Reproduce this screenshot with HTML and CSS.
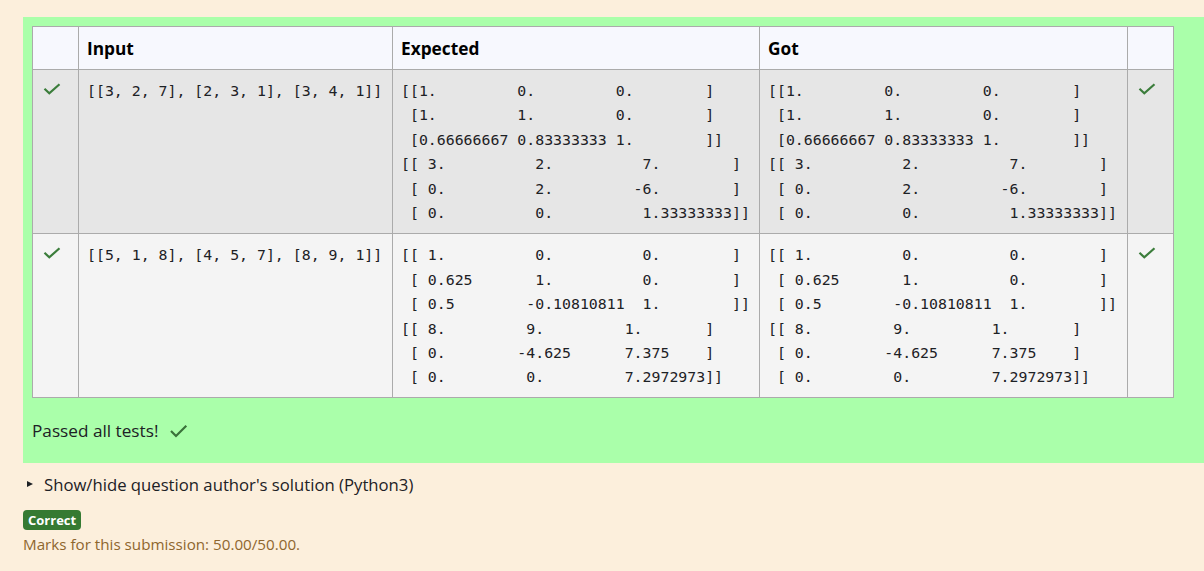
FILE: index.html
```html
<!DOCTYPE html>
<html lang="en">
<head>
<meta charset="utf-8">
<title>Test results</title>
<link rel="stylesheet" href="styles.css">
</head>
<body>
<div class="outcome">
  <div class="results">
    <table class="tests">
      <colgroup>
        <col class="c-icon">
        <col class="c-input">
        <col class="c-exp">
        <col class="c-got">
        <col class="c-icon">
      </colgroup>
      <thead>
        <tr>
          <th></th>
          <th>Input</th>
          <th>Expected</th>
          <th>Got</th>
          <th></th>
        </tr>
      </thead>
      <tbody>
        <tr class="r0">
          <td class="ic"><svg class="tick" viewBox="0 0 18 12" width="18" height="12"><path d="M1.5 5.8 L6.3 10.3 L16.5 1.2"/></svg></td>
          <td><pre>[[3, 2, 7], [2, 3, 1], [3, 4, 1]]</pre></td>
          <td><pre>[[1.         0.         0.        ]
 [1.         1.         0.        ]
 [0.66666667 0.83333333 1.        ]]
[[ 3.          2.          7.        ]
 [ 0.          2.         -6.        ]
 [ 0.          0.          1.33333333]]</pre></td>
          <td><pre>[[1.         0.         0.        ]
 [1.         1.         0.        ]
 [0.66666667 0.83333333 1.        ]]
[[ 3.          2.          7.        ]
 [ 0.          2.         -6.        ]
 [ 0.          0.          1.33333333]]</pre></td>
          <td class="ic"><svg class="tick" viewBox="0 0 18 12" width="18" height="12"><path d="M1.5 5.8 L6.3 10.3 L16.5 1.2"/></svg></td>
        </tr>
        <tr class="r1">
          <td class="ic"><svg class="tick" viewBox="0 0 18 12" width="18" height="12"><path d="M1.5 5.8 L6.3 10.3 L16.5 1.2"/></svg></td>
          <td><pre>[[5, 1, 8], [4, 5, 7], [8, 9, 1]]</pre></td>
          <td><pre>[[ 1.          0.          0.        ]
 [ 0.625       1.          0.        ]
 [ 0.5        -0.10810811  1.        ]]
[[ 8.         9.         1.       ]
 [ 0.        -4.625      7.375    ]
 [ 0.         0.         7.2972973]]</pre></td>
          <td><pre>[[ 1.          0.          0.        ]
 [ 0.625       1.          0.        ]
 [ 0.5        -0.10810811  1.        ]]
[[ 8.         9.         1.       ]
 [ 0.        -4.625      7.375    ]
 [ 0.         0.         7.2972973]]</pre></td>
          <td class="ic"><svg class="tick" viewBox="0 0 18 12" width="18" height="12"><path d="M1.5 5.8 L6.3 10.3 L16.5 1.2"/></svg></td>
        </tr>
      </tbody>
    </table>
    <p class="passed">Passed all tests! <svg class="tick big" viewBox="0 0 18 14" width="19" height="14"><path d="M1.5 7 L6.5 12 L16.8 1.8"/></svg></p>
  </div>
  <div class="toggle"><span class="tri"></span>Show/hide question author's solution (Python3)</div>
  <div class="badge-row"><span class="badge">Correct</span></div>
  <div class="marks">Marks for this submission: 50.00/50.00.</div>
</div>
</body>
</html>
```
FILE: styles.css
```css
html, body {
  margin: 0;
  padding: 0;
  background: #fcefdc;
  overflow: hidden;
}
body {
  font-family: "Open Sans", "Noto Sans", sans-serif;
  color: #1d2125;
}
.outcome {
  padding: 17px 0 0 23px;
}
.results {
  background: #aaffaa;
  padding: 9px 0 0 9px;
}
.tests {
  border-collapse: collapse;
  table-layout: fixed;
  width: 1141px;
}
.c-icon { width: 46px; }
.c-input { width: 314px; }
.c-exp { width: 367px; }
.c-got { width: 368px; }
.tests th, .tests td {
  border: 1px solid #ababab;
  text-align: left;
  vertical-align: top;
}
.tests th {
  background: #f7f8fe;
  color: #000;
  font-weight: 700;
  font-size: 17.3px;
  line-height: 25px;
  padding: 9px 8px 8px;
}
.tests td {
  padding: 9px 8px 8px;
}
.r1 td {
  padding-bottom: 7px;
}
.tests td.ic {
  padding: 13px 0 0 10px;
}
.r0 td { background: #e6e6e6; }
.r1 td { background: #f4f4f4; }
pre {
  margin: 0;
  font-family: "DejaVu Sans Mono", "Liberation Mono", monospace;
  font-size: 14.87px;
  line-height: 24.4px;
  color: #1d2125;
  white-space: pre;
}
.tick {
  display: block;
  fill: none;
  stroke: #3b7d3b;
  stroke-width: 2.2;
}
.tick.big {
  display: inline-block;
  vertical-align: -1px;
  margin-left: 6px;
  stroke: #3a723a;
}
.passed {
  margin: 0;
  padding: 20px 0 19px 0;
  font-size: 17.2px;
  line-height: 26px;
  color: #1d2125;
}
.toggle {
  margin-top: 9px;
  font-size: 16.7px;
  line-height: 25px;
  color: #1d2125;
  display: flex;
  align-items: center;
}
.tri {
  width: 0;
  height: 0;
  border-left: 6px solid #1d2125;
  border-top: 3.5px solid transparent;
  border-bottom: 3.5px solid transparent;
  margin: 0 11px 0 4px;
}
.badge-row {
  margin-top: 11px;
  height: 20px;
}
.badge {
  display: inline-block;
  background: #357a32;
  color: #fff;
  font-weight: 700;
  font-size: 13px;
  line-height: 20px;
  height: 20px;
  padding: 0 5px;
  border-radius: 4px;
}
.marks {
  margin-top: 5px;
  font-size: 15.2px;
  line-height: 22px;
  color: #8e662e;
}
```
